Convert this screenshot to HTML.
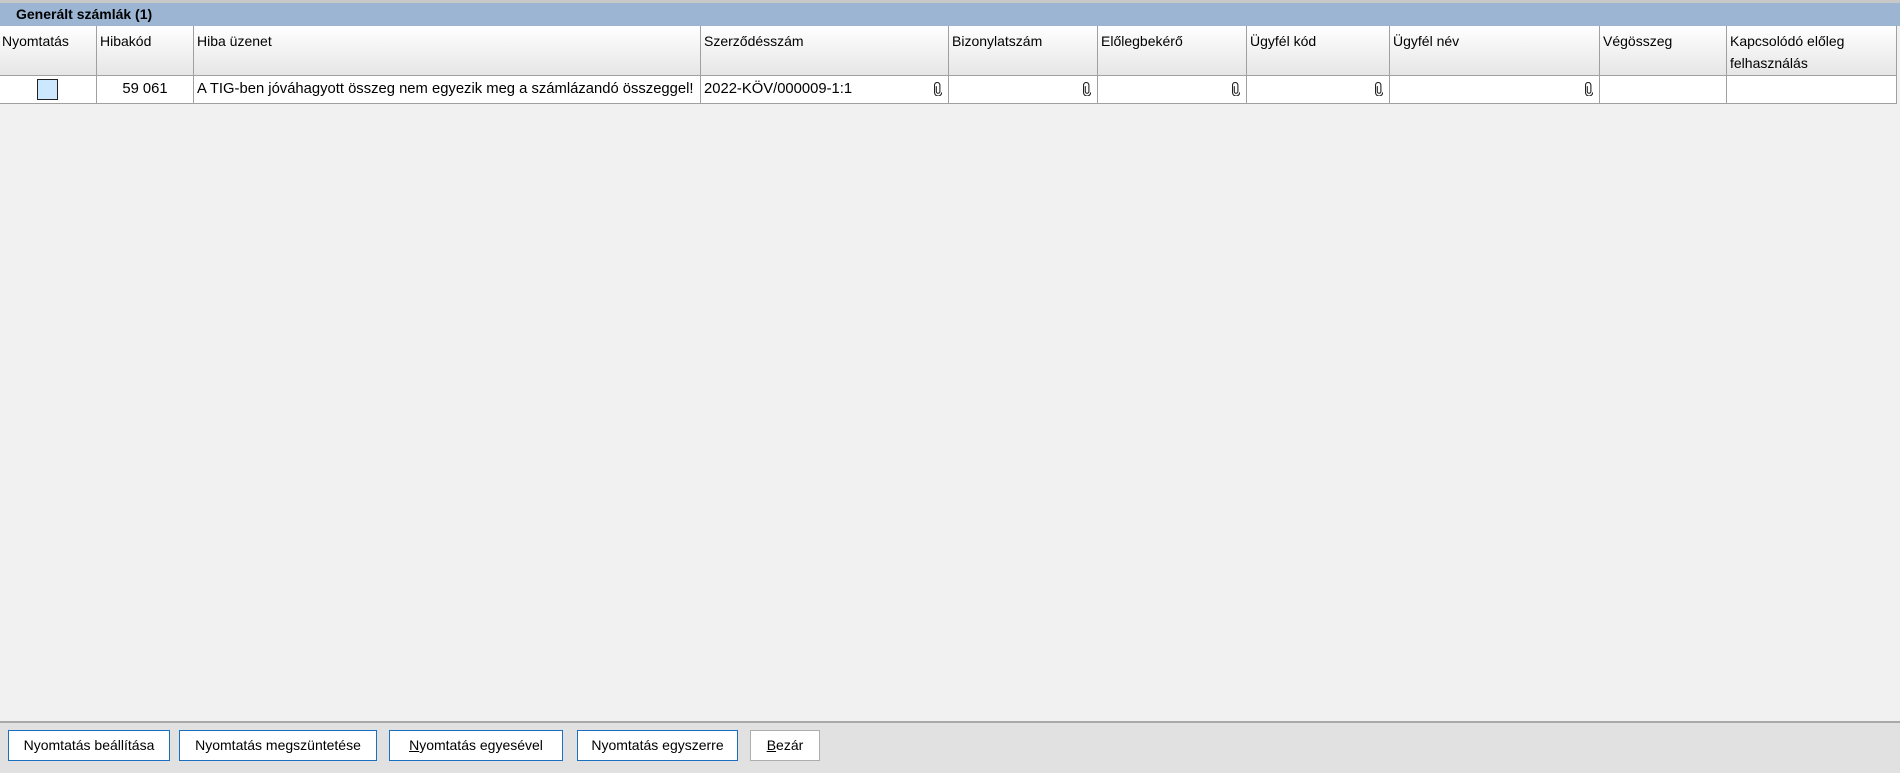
<!DOCTYPE html>
<html><head><meta charset="utf-8"><style>
*{box-sizing:border-box;margin:0;padding:0}
body{width:1900px;height:773px;background:#f1f1f1;font-family:"Segoe UI","Liberation Sans",sans-serif;font-size:14px;color:#000;position:relative;overflow:hidden}
.top{position:absolute;left:0;top:0;width:1900px;height:3px;background:#c8c8c8}
.title{position:absolute;left:0;top:3px;width:1900px;height:23px;background:#9bb5d3;font-weight:bold;font-size:14px;line-height:23px;padding-left:16px}
.hdr{position:absolute;top:26px;height:50px;background:linear-gradient(#fff,#e6e6e6);border-right:1px solid #a0a0a0;border-bottom:1px solid #a0a0a0;padding:4px 3px;line-height:22px;font-size:14px}
.cell{position:absolute;top:76px;height:28px;background:#fff;border-right:1px solid #a0a0a0;border-bottom:1px solid #a0a0a0;line-height:26px;padding:0 3px;font-size:14.8px;white-space:nowrap}
.clip{position:absolute;right:6px;top:6px}
.cb{position:absolute;left:37px;top:3px;width:21px;height:21px;background:#cce8ff;border:1px solid #222}
.bar{position:absolute;left:0;top:721px;width:1900px;height:52px;background:#e1e1e1;border-top:2px solid #a8a8a8}
.btn{position:absolute;top:730px;height:31px;background:#fff;border:1px solid #1a6fc0;font-size:14px;line-height:29px;text-align:center}
</style></head><body>
<div class="top"></div>
<div class="title">Generált számlák (1)</div>
<div class="hdr" style="left:0;width:97px;padding-left:2px">Nyomtatás</div>
<div class="hdr" style="left:97px;width:97px">Hibakód</div>
<div class="hdr" style="left:194px;width:507px">Hiba üzenet</div>
<div class="hdr" style="left:701px;width:248px">Szerződésszám</div>
<div class="hdr" style="left:949px;width:149px">Bizonylatszám</div>
<div class="hdr" style="left:1098px;width:149px">Előlegbekérő</div>
<div class="hdr" style="left:1247px;width:143px">Ügyfél kód</div>
<div class="hdr" style="left:1390px;width:210px">Ügyfél név</div>
<div class="hdr" style="left:1600px;width:127px">Végösszeg</div>
<div class="hdr" style="left:1727px;width:170px">Kapcsolódó előleg felhasználás</div>

<div class="cell" style="left:0;width:97px"><div class="cb"></div></div>
<div class="cell" style="left:97px;width:97px;text-align:center">59 061</div>
<div class="cell" style="left:194px;width:507px">A TIG-ben jóváhagyott összeg nem egyezik meg a számlázandó összeggel!</div>
<div class="cell" style="left:701px;width:248px">2022-KÖV/000009-1:1<svg class="clip" width="8" height="14" viewBox="0 0 8 14"><path d="M2 4v6a2 2 0 0 0 4 0V3a3 3 0 0 0-6 0v8a4 4 0 0 0 8 0" fill="none" stroke="#222" stroke-width="1.2" transform="translate(0.5 0.5) scale(0.9)"/></svg></div>
<div class="cell" style="left:949px;width:149px"><svg class="clip" width="8" height="14" viewBox="0 0 8 14"><path d="M2 4v6a2 2 0 0 0 4 0V3a3 3 0 0 0-6 0v8a4 4 0 0 0 8 0" fill="none" stroke="#222" stroke-width="1.2" transform="translate(0.5 0.5) scale(0.9)"/></svg></div>
<div class="cell" style="left:1098px;width:149px"><svg class="clip" width="8" height="14" viewBox="0 0 8 14"><path d="M2 4v6a2 2 0 0 0 4 0V3a3 3 0 0 0-6 0v8a4 4 0 0 0 8 0" fill="none" stroke="#222" stroke-width="1.2" transform="translate(0.5 0.5) scale(0.9)"/></svg></div>
<div class="cell" style="left:1247px;width:143px"><svg class="clip" width="8" height="14" viewBox="0 0 8 14"><path d="M2 4v6a2 2 0 0 0 4 0V3a3 3 0 0 0-6 0v8a4 4 0 0 0 8 0" fill="none" stroke="#222" stroke-width="1.2" transform="translate(0.5 0.5) scale(0.9)"/></svg></div>
<div class="cell" style="left:1390px;width:210px"><svg class="clip" width="8" height="14" viewBox="0 0 8 14"><path d="M2 4v6a2 2 0 0 0 4 0V3a3 3 0 0 0-6 0v8a4 4 0 0 0 8 0" fill="none" stroke="#222" stroke-width="1.2" transform="translate(0.5 0.5) scale(0.9)"/></svg></div>
<div class="cell" style="left:1600px;width:127px"></div>
<div class="cell" style="left:1727px;width:170px"></div>

<div class="bar"></div>
<div class="btn" style="left:8px;width:162px">Nyomtatás beállítása</div>
<div class="btn" style="left:179px;width:198px">Nyomtatás megszüntetése</div>
<div class="btn" style="left:389px;width:174px"><u>N</u>yomtatás egyesével</div>
<div class="btn" style="left:577px;width:161px">Nyomtatás egyszerre</div>
<div class="btn" style="left:750px;width:70px;border-color:#adadad"><u>B</u>ezár</div>
</body></html>
